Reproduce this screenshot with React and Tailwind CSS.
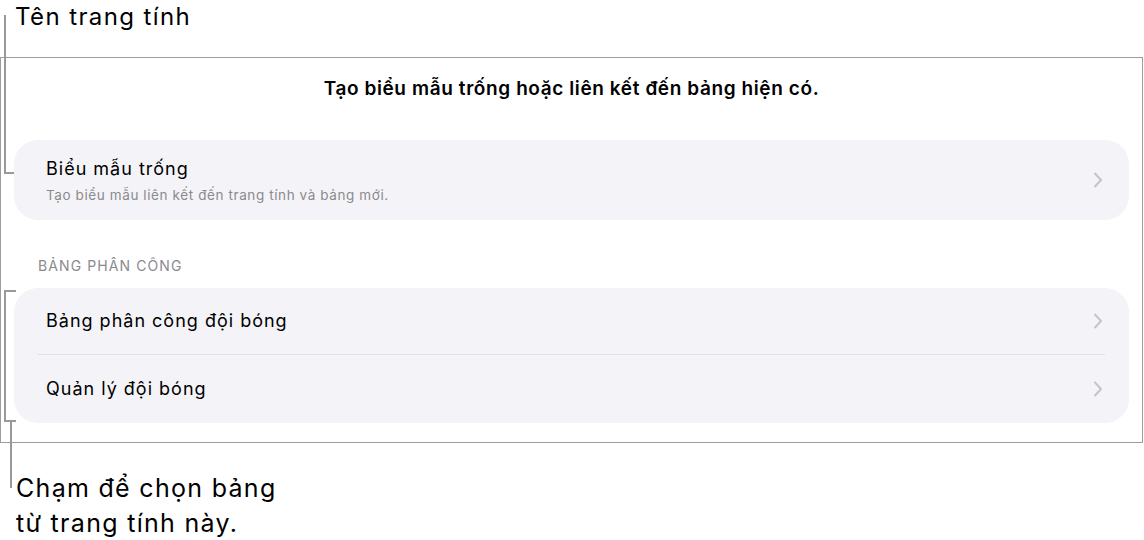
import React from "react";

function Chevron() {
  return (
    <svg width="10" height="16" viewBox="0 0 10 16" fill="none" className="shrink-0">
      <path d="M2 1.5 L8 8 L2 14.5" stroke="#c5c5c8" strokeWidth="2" strokeLinecap="round" strokeLinejoin="round" />
    </svg>
  );
}

function Row({ title, subtitle, className = "" }) {
  return (
    <div className={`flex items-center justify-between pl-[32px] pr-[26px] ${className}`}>
      <div className="flex flex-col">
        <span className="text-[18px] leading-[24px] tracking-[1px] text-black">{title}</span>
        {subtitle && (
          <span className="text-[13.5px] leading-[18px] tracking-[0.6px] text-[#8a8a8e] mt-[5px]">{subtitle}</span>
        )}
      </div>
      <Chevron />
    </div>
  );
}

export default function App() {
  return (
    <div
      className="relative w-[1144px] h-[540px] bg-white overflow-hidden"
      style={{ fontFamily: "Inter, 'Noto Sans', sans-serif" }}
    >
      {/* top callout label */}
      <div className="h-[57px] pl-[15px]">
        <span className="text-[24px] leading-[34px] tracking-[1.4px] text-black">Tên trang tính</span>
      </div>

      {/* sheet panel */}
      <div className="w-[1143px] h-[386px] border border-[#9d9d9d] flex flex-col">
        <div className="h-[82px] flex justify-center pt-[19px]">
          <span className="text-[19px] leading-[24px] font-semibold text-black tracking-[0.6px]">
            Tạo biểu mẫu trống hoặc liên kết đến bảng hiện có.
          </span>
        </div>

        <div className="mx-[13px] rounded-[24px] bg-[#f4f4f8]">
          <Row className="h-[80px]" title="Biểu mẫu trống" subtitle="Tạo biểu mẫu liên kết đến trang tính và bảng mới." />
        </div>

        <div className="h-[68px] flex items-center pl-[37px] pt-[22px]">
          <span className="text-[14px] text-[#8a8a8e] tracking-[1.1px]">BẢNG PHÂN CÔNG</span>
        </div>

        <div className="mx-[13px] rounded-[24px] bg-[#f4f4f8] flex flex-col">
          <Row className="h-[66px]" title="Bảng phân công đội bóng" />
          <div className="ml-[24px] mr-[24px] h-px bg-[#e2e2e6]" />
          <Row className="h-[68px]" title="Quản lý đội bóng" />
        </div>
      </div>

      {/* bottom callout label */}
      <div className="pl-[16px] pt-[28px] text-[25px] leading-[35px] tracking-[1.3px] text-black">
        <div>Chạm để chọn bảng</div>
        <div>từ trang tính này.</div>
      </div>

      {/* callout leader lines */}
      <div className="absolute left-[4px] top-[15px] w-[2px] h-[159px] bg-[#999]" />
      <div className="absolute left-[4px] top-[172px] w-[10px] h-[2px] bg-[#999]" />

      <div className="absolute left-[4px] top-[290px] w-[2px] h-[132px] bg-[#999]" />
      <div className="absolute left-[4px] top-[290px] w-[12px] h-[2px] bg-[#999]" />
      <div className="absolute left-[4px] top-[420px] w-[12px] h-[2px] bg-[#999]" />
      <div className="absolute left-[10px] top-[420px] w-[2px] h-[68px] bg-[#999]" />
    </div>
  );
}
